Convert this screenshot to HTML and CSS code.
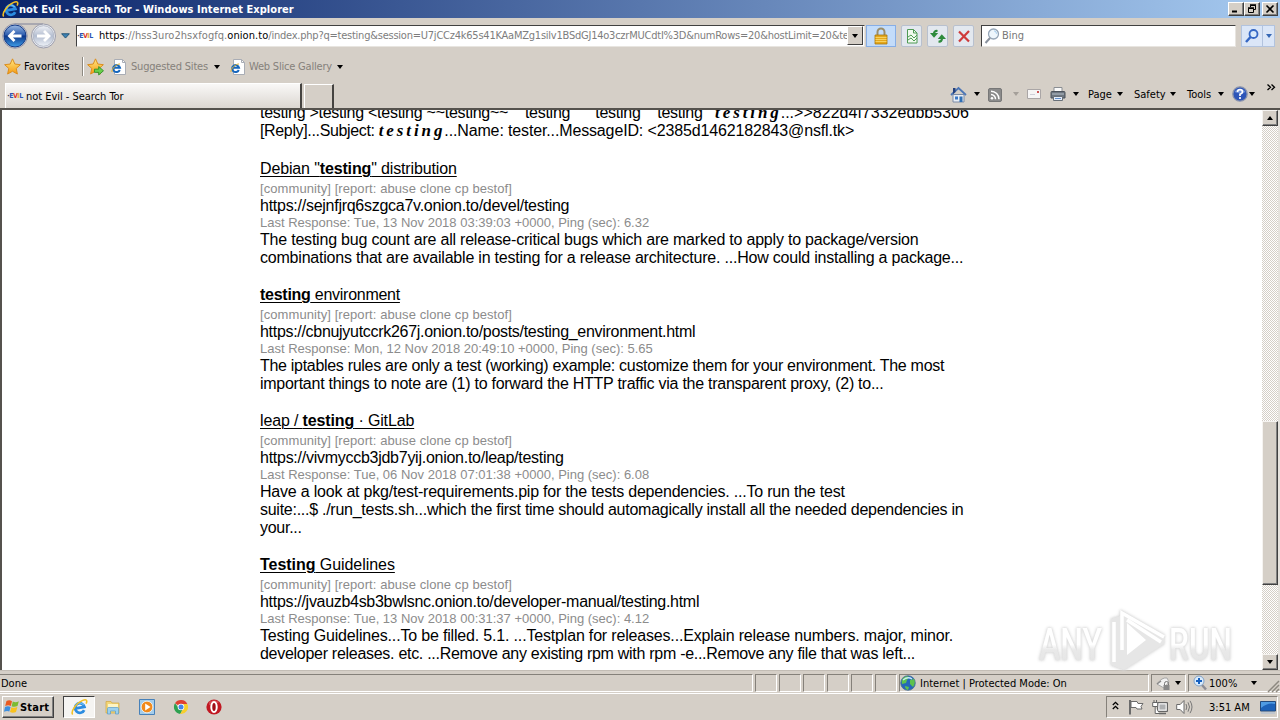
FILE: index.html
```
<!DOCTYPE html>
<html lang="en">
<head>
<meta charset="utf-8">
<title>not Evil - Search Tor</title>
<link rel="stylesheet" href="styles.css">
</head>
<body>
<svg width="0" height="0" class="defs">
  <defs>
    <linearGradient id="blueBall" x1="0" y1="0" x2="0" y2="1"><stop offset="0" stop-color="#9dbbe4"/><stop offset=".45" stop-color="#2c5cae"/><stop offset=".5" stop-color="#0c3588"/><stop offset="1" stop-color="#3fa0ea"/></linearGradient>
    <linearGradient id="greyBall" x1="0" y1="0" x2="0" y2="1"><stop offset="0" stop-color="#f0f2f7"/><stop offset=".5" stop-color="#b3bdd0"/><stop offset="1" stop-color="#eef2f8"/></linearGradient>
    <linearGradient id="gold" x1="0" y1="0" x2="0" y2="1"><stop offset="0" stop-color="#ffe884"/><stop offset="1" stop-color="#f59a10"/></linearGradient>
    <symbol id="ie" viewBox="0 0 16 16">
      <path d="M12.4 10.400A4.500 4.500 0 1 1 12.700 7.500L4.600 8.800" fill="none" stroke="#2c8ce0" stroke-width="2.600"/>
      <path d="M4.500 5.800Q8 1.800 12 5.600" fill="none" stroke="#6cc0f4" stroke-width="1"/>
      <path d="M1.600 14.6C-.6 12 5.2 3.6 11 1.300c3.600-1.400 4.600.2 3.200 3" fill="none" stroke="#f2c024" stroke-width="1.500"/>
    </symbol>
    <symbol id="iepage" viewBox="0 0 16 16">
      <path d="M3.500.500h8l3 3v12h-11z" fill="#fff" stroke="#a9adb5"/>
      <path d="M11.500.500v3h3" fill="none" stroke="#a9adb5"/>
      <path d="M8.800 11A3.500 3.500 0 1 1 9 8.800H2.800" fill="none" stroke="#1767bd" stroke-width="2"/>
      <path d="M1 13C0 10 6 4.600 9 5" fill="none" stroke="#e9b52c" stroke-width="1"/>
    </symbol>
    <symbol id="star" viewBox="0 0 16 16">
      <path d="M8 .8l2.200 4.900 5.200.6-3.900 3.500 1.100 5.300L8 12.500l-4.600 2.600 1.100-5.300L.6 6.300l5.200-.6z" fill="url(#gold)" stroke="#d98a1a" stroke-width=".9"/>
    </symbol>
  </defs>
</svg>

<div class="screen">
  <header class="titlebar">
    <svg class="ic18" viewBox="0 0 16 16"><use href="#ie"/></svg>
    <h1 class="title">not Evil - Search Tor - Windows Internet Explorer</h1>
    <div class="winbtns">
      <span class="winbtn"><svg viewBox="0 0 12 10"><path d="M2 7.500h5" stroke="#000" stroke-width="2"/></svg></span>
      <span class="winbtn"><svg viewBox="0 0 12 10"><path d="M4.500 3V1.500h5v4H8M2.500 4.500h5v4h-5z" fill="none" stroke="#000"/><path d="M4 1h6M2 4h6" stroke="#000" stroke-width="1.500"/></svg></span>
      <span class="winbtn close"><svg viewBox="0 0 12 10"><path d="M2.500 1.500l7 7m0-7l-7 7" stroke="#000" stroke-width="1.600"/></svg></span>
    </div>
  </header>

  <div class="navbar">
    <svg class="navballs" viewBox="0 0 58 30">
      <path d="M15 3h28" stroke="#a9a8b0" stroke-width="2"/>
      <circle cx="15" cy="15" r="12.300" fill="#d9dbe2" stroke="#9897a3"/>
      <circle cx="15" cy="15" r="11" fill="url(#blueBall)" stroke="#143a86"/>
      <path d="M9 15h12.500M14.500 10L9.500 15l5 5" fill="none" stroke="#fff" stroke-width="2.800"/>
      <circle cx="43.500" cy="15" r="12" fill="#e9ebf0" stroke="#9a9cab"/>
      <circle cx="43.500" cy="15" r="10.300" fill="url(#greyBall)" stroke="#b4bac8"/>
      <path d="M37 15h12M44 10l5 5-5 5" fill="none" stroke="#fff" stroke-width="2.800"/>
    </svg>
    <svg class="navdrop" viewBox="0 0 10 6"><path d="M.7.500h8.600L5 5.300z" fill="#3d83b4" stroke="#1b4d72"/></svg>
    <div class="address">
      <span class="fav"><i class="o">·</i><i class="b">E</i><i class="r">V</i><i class="y">I</i><i class="b">L</i></span>
      <span class="url"><span class="host"><b>https</b>://hss3uro2hsxfogfq.<b>onion.to</b></span>/index.php?q=testing&amp;session=U7jCCz4k65s41KAaMZg1silv1BSdGJ14o3czrMUCdtI%3D&amp;numRows=20&amp;hostLimit=20&amp;te</span>
      <span class="combo"><i class="tri"></i></span>
    </div>
    <span class="lock"><svg viewBox="0 0 16 18"><path d="M4.500 9V5a3.500 3.500 0 0 1 7 0v4" fill="none" stroke="#9a8d6a" stroke-width="2"/><path d="M2 8h12v9H2z" fill="#e5a81c" stroke="#a8760c" stroke-width=".8"/><path d="M2.500 10.500h11M2.500 12.500h11M2.500 14.500h11" stroke="#f6d160"/></svg></span>
    <span class="navbtn"><svg viewBox="0 0 16 16"><path d="M3.500 1.500h6l3.500 3.500v10H3.500z" fill="#f0faee" stroke="#4f9a54"/><path d="M9.500 1.500V5H13" fill="none" stroke="#4f9a54"/><path d="M4 9l3-2 3 3 3-3M4 12l3-2 3 3 3-3" fill="none" stroke="#4f9a54"/></svg></span>
    <span class="navbtn"><svg viewBox="0 0 16 16"><path d="M7.500 3Q4 2.500 4 6" fill="none" stroke="#2e8b3c" stroke-width="2.200"/><path d="M0 5h8.200L4 9.800z" fill="#2e8b3c"/><path d="M8.500 13.500Q12 14 12 10" fill="none" stroke="#2e8b3c" stroke-width="2.200"/><path d="M7.800 11H16l-4.200-4.800z" fill="#2e8b3c"/></svg></span>
    <span class="navbtn"><svg viewBox="0 0 16 16"><path d="M3 3.500l10 10M13 3L3 13.500" stroke="#cf3a3a" stroke-width="2.200"/></svg></span>
    <div class="search">
      <svg class="ic16" viewBox="0 0 16 16"><circle cx="9.500" cy="6" r="5" fill="#eef6fc" stroke="#95a5b7" stroke-width="1.300"/><path d="M6 10L1.500 15" stroke="#8a929e" stroke-width="2"/><path d="M10 2.800q2.500.4 2.500 3" stroke="#a5cdee" fill="none"/></svg>
      <span>Bing</span>
    </div>
    <span class="go"><svg class="ic16" viewBox="0 0 16 16"><circle cx="9.500" cy="6" r="4" fill="#d8e9fb" stroke="#3567c4" stroke-width="1.800"/><path d="M6.500 9L2 14" stroke="#3567c4" stroke-width="2.500"/></svg></span>
    <span class="godrop"><i class="tri blue"></i></span>
  </div>

  <div class="favbar">
    <svg class="ic17" viewBox="0 0 16 16"><use href="#star"/></svg>
    <span class="favtext">Favorites</span>
    <i class="sep"></i>
    <svg class="ic17 add" viewBox="0 0 16 16"><use href="#star"/><path d="M7 10.500h4V8l4.500 4-4.500 4v-2.500H7z" fill="#69cf4b" stroke="#2b8b24" stroke-width=".8"/></svg>
    <svg class="ic16 sug" viewBox="0 0 16 16"><use href="#iepage"/></svg>
    <span class="gtext s1">Suggested Sites</span><i class="tri"></i>
    <svg class="ic16 web" viewBox="0 0 16 16"><use href="#iepage"/></svg>
    <span class="gtext s2">Web Slice Gallery</span><i class="tri"></i>
  </div>

  <div class="tabrow">
    <div class="tab"><span class="fav"><i class="o">·</i><i class="b">E</i><i class="r">V</i><i class="y">I</i><i class="b">L</i></span><span class="tabtext">not Evil - Search Tor</span></div>
    <div class="newtab"></div>
    <div class="cmds">
      <svg class="ic17" viewBox="0 0 17 17"><path d="M3 8.500h11V16H3z" fill="#e8eef6" stroke="#7c8ba5"/><path d="M1 9l7.500-7L16 9" fill="none" stroke="#4c76b6" stroke-width="1.800"/><path d="M3 2h2.500v4L3 8z" fill="#24417d"/><path d="M9.500 10.500h3V16h-3z" fill="#2f6fb5"/><path d="M5 10.500h3v3H5z" fill="#3b79c6"/></svg>
      <i class="tri c1"></i>
      <svg class="rss" viewBox="0 0 14 14"><rect x=".5" y=".5" width="13" height="13" rx="1.500" fill="#8b8b8b" stroke="#777"/><circle cx="4" cy="10.300" r="1.300" fill="#fff"/><path d="M3 6.500a4.500 4.500 0 0 1 4.500 4.800M3 3.200a8 8 0 0 1 8 8.100" fill="none" stroke="#fff" stroke-width="1.500"/></svg>
      <i class="tri faint"></i>
      <svg class="mail" viewBox="0 0 14 10"><path d="M.5.500h13v9H.5z" fill="#f6f5f5" stroke="#aaa6a6"/><path d="M10 2h2v2h-2z" fill="#c55" /><path d="M3 5.500h5" stroke="#cfcfd8"/></svg>
      <svg class="ic16 print" viewBox="0 0 16 16"><path d="M4 1.500h8V6H4z" fill="#fafafa" stroke="#8a8e93"/><path d="M1 6.500q0-1 1-1h12q1 0 1 1V12H1z" fill="#6d7680" stroke="#4c535b"/><path d="M2 8h12" stroke="#b9c1c9"/><path d="M3.500 10.500h9v4h-9z" fill="#e6eefa" stroke="#687078"/><path d="M5 12.500h6" stroke="#6590c8"/></svg>
      <i class="tri c2"></i>
      <span class="cmd w1">Page</span><i class="tri"></i>
      <span class="cmd w2">Safety</span><i class="tri"></i>
      <span class="cmd w3">Tools</span><i class="tri"></i>
      <svg class="ic16 help" viewBox="0 0 16 16"><circle cx="8" cy="8" r="7.200" fill="#2d55b8" stroke="#8b94ac" stroke-width="1.300"/><path d="M2.500 6a6 5 0 0 1 11 0q-5 2.500-11 0z" fill="#88a8e5" opacity=".7"/><path d="M5.500 6Q5.600 3.700 8 3.700T10.500 6Q10.500 7.300 8 8.200V10M8 11v2" fill="none" stroke="#fff" stroke-width="1.700"/></svg>
      <i class="tri c3"></i>
      <svg class="chev" viewBox="0 0 8 7"><path d="M.5.500l3 2.800-3 2.800M4.500.500l3 2.800-3 2.800" fill="none" stroke="#000" stroke-width="1.300"/></svg>
    </div>
  </div>

  <div class="viewport">
    <main class="page">
      <div class="prev">
        <p class="k26">testing &gt;testing &lt;testing ~~testing~~&nbsp; &nbsp; testing&nbsp; &nbsp; &nbsp; testing&nbsp; &nbsp; testing&nbsp; &nbsp;<em>testing</em><span class="k0">...&gt;&gt;822d4f7332edbb5306</span></p>
        <p class="k35">[Reply]...Subject: <em>testing</em><span class="k14">...Name: tester...MessageID: &lt;2385d1462182843@nsfl.tk&gt;</span></p>
      </div>
      <article class="hit">
        <h2><a class="k14">Debian "<b>testing</b>" distribution</a></h2>
        <p class="meta tags">[community] [report: abuse clone cp bestof]</p>
        <p class="link k26">https://sejnfjrq6szgca7v.onion.to/devel/testing</p>
        <p class="meta resp">Last Response: Tue, 13 Nov 2018 03:39:03 +0000, Ping (sec): 6.32</p>
        <p class="desc k22">The testing bug count are all release-critical bugs which are marked to apply to package/version<br>combinations that are available in testing for a release architecture. ...How could installing a package...</p>
      </article>
      <article class="hit">
        <h2><a class="k26"><b>testing</b> environment</a></h2>
        <p class="meta tags">[community] [report: abuse clone cp bestof]</p>
        <p class="link k30">https://cbnujyutccrk267j.onion.to/posts/testing_environment.html</p>
        <p class="meta resp">Last Response: Mon, 12 Nov 2018 20:49:10 +0000, Ping (sec): 5.65</p>
        <p class="desc k26"><span class="k30">The iptables rules are only a test (working) example: customize them for your environment. The most</span><br>important things to note are (1) to forward the HTTP traffic via the transparent proxy, (2) to...</p>
      </article>
      <article class="hit">
        <h2><a class="k14">leap / <b>testing</b> · GitLab</a></h2>
        <p class="meta tags">[community] [report: abuse clone cp bestof]</p>
        <p class="link k26">https://vivmyccb3jdb7yij.onion.to/leap/testing</p>
        <p class="meta resp">Last Response: Tue, 06 Nov 2018 07:01:38 +0000, Ping (sec): 6.08</p>
        <p class="desc k26"><span class="k22">Have a look at pkg/test-requirements.pip for the tests dependencies. ...To run the test</span><br>suite:...$ ./run_tests.sh...which the first time should automagically install all the needed dependencies in<br>your...</p>
      </article>
      <article class="hit">
        <h2><a class="k5"><b>Testing</b> Guidelines</a></h2>
        <p class="meta tags">[community] [report: abuse clone cp bestof]</p>
        <p class="link k30">https://jvauzb4sb3bwlsnc.onion.to/developer-manual/testing.html</p>
        <p class="meta resp">Last Response: Tue, 13 Nov 2018 00:31:37 +0000, Ping (sec): 4.12</p>
        <p class="desc k28"><span class="k17">Testing Guidelines...To be filled. 5.1. ...Testplan for releases...Explain release numbers. major, minor.</span><br>developer releases. etc. ...Remove any existing rpm with rpm -e...Remove any file that was left...</p>
      </article>
    </main>
    <div class="scroll">
      <span class="sbtn"><i class="tri up"></i></span>
      <span class="thumb"></span>
      <span class="sbtn"><i class="tri"></i></span>
    </div>
  </div>

  <footer class="status">
    <span class="pane done">Done</span>
    <span class="pane cell"></span><span class="pane cell"></span><span class="pane cell"></span><span class="pane cell"></span><span class="pane cell"></span><span class="pane cell"></span>
    <span class="pane zone"><svg class="ic16" viewBox="0 0 16 16"><circle cx="8" cy="8" r="7.300" fill="#2567b8" stroke="#4b6f92" stroke-width=".8"/><path d="M3 3q4-3 6-1l-2 3-1 3-4 1q-1-3 1-6zM10 5l4-1q2 4-1 8l-3-3zM5 11l4 1-1 3q-3-1-3-4z" fill="#5dc24c"/><path d="M3 5q5-4 9-1" fill="none" stroke="#c5ecf7" stroke-width="1.300"/></svg><span>Internet | Protected Mode: On</span></span>
    <span class="pane prot"><svg class="ic16" viewBox="0 0 16 16"><path d="M1 9q5-7 10-6l2 4-5 6z" fill="#f2f2f2" stroke="#a7a7a7"/><path d="M1 9l4-3" stroke="#888" stroke-width="1.500"/><path d="M8.500 10V8.500a2 2 0 0 1 4 0V10" fill="none" stroke="#777"/><path d="M7.500 10h6v5h-6z" fill="#898989"/></svg><i class="tri"></i></span>
    <span class="pane zoomp"><svg class="ic16" viewBox="0 0 16 16"><path d="M10 10l4 4.500" stroke="#8d8d95" stroke-width="2.500"/><circle cx="7" cy="6" r="5" fill="#d9ebfc" stroke="#83a2c6"/><path d="M7 3v6M4 6h6" stroke="#1660c0" stroke-width="2"/></svg><span class="pct">100%</span><i class="tri"></i>
      <svg class="grip" viewBox="0 0 12 12"><path d="M1 12L12 1M5 12l7-7M9 12l3-3" stroke="#8d8980" stroke-width="1.500"/></svg></span>
  </footer>

  <div class="taskbar">
    <span class="start"><svg class="ic16" viewBox="0 0 16 16"><path d="M2.500 2q3-1.500 5.500.2L6.800 7Q4.500 5.500 1.200 7z" fill="#ea5a20"/><path d="M8.800 2.500q2.700 1.500 6-.2L13.500 7Q10.500 8.500 7.600 7.200z" fill="#7cbb32"/><path d="M1 8q3-1.500 5.600 0L5.300 12.500Q3 11.500 0 12.800z" fill="#3e8fdf"/><path d="M7.400 8.300q3 1.200 6-.2L12 12.900Q9 14.500 6 13z" fill="#f9c21e"/></svg><b>Start</b></span>
    <span class="task"><svg class="ic18" viewBox="0 0 16 16"><use href="#ie"/></svg></span>
    <svg class="ic16 q1" viewBox="0 0 16 16"><path d="M1 2.500h5l1 1.500h7v10H1z" fill="#f2d678" stroke="#d2a63f" stroke-width=".7"/><path d="M3 5h10v5H3z" fill="#fdf4c4"/><path d="M2.500 15V9.500q0-1 1-1h9q1 0 1 1V15h-3v-3h-5v3z" fill="#9bd0ee" stroke="#5a9cc8" stroke-width=".7"/></svg>
    <svg class="ic16 q2" viewBox="0 0 16 16"><path d="M.5.500h15v15H.5z" fill="#a4cdeb" stroke="#4781b9"/><circle cx="8" cy="8" r="5.800" fill="#f18a1c" stroke="#fff" stroke-width=".7"/><path d="M6.200 4.500L11.500 8l-5.300 3.500z" fill="#fff"/></svg>
    <svg class="ic14 q3" viewBox="0 0 14 14"><path d="M7 7L1 3.300A7 7 0 0 1 13.300 4H7z" fill="#df4031"/><path d="M1 3.300A7 7 0 0 0 6.200 14L9.200 8.500 5 8.500z" fill="#2da150"/><path d="M13.300 4A7 7 0 0 1 6.200 14L9.800 8 9 4z" fill="#f7cf2b"/><circle cx="7" cy="7" r="3.300" fill="#fff"/><circle cx="7" cy="7" r="2.500" fill="#4484e8"/></svg>
    <svg class="ic16 q4" viewBox="0 0 16 16"><circle cx="8" cy="8" r="7.600" fill="#c11822"/><path d="M3 3Q8-.5 13 3q-2 3-10 3z" fill="#e7707a" opacity=".5"/><ellipse cx="8" cy="8" rx="2.700" ry="5" fill="#a00c16" stroke="#fff" stroke-width="2"/></svg>
    <div class="tray">
      <svg class="up2" viewBox="0 0 7 9"><path d="M.8 4l2.700-2.700L6.200 4M.8 8l2.700-2.700L6.200 8" fill="none" stroke="#000" stroke-width="1.300"/></svg>
      <svg class="ic16 t1" viewBox="0 0 16 16"><path d="M2 1v14.500" stroke="#6b6b6b" stroke-width="2"/><path d="M3 2.500h6l1 2h5l-2 3 1 2.500H9L8 8.500H3z" fill="#fff" stroke="#6b6b6b"/></svg>
      <svg class="ic16 t2" viewBox="0 0 16 16"><path d="M5.500 3.500h10v9h-10z" fill="#c8c8c8" stroke="#666"/><path d="M7 5h7v6H7z" fill="#aeb0b2" stroke="#fff" stroke-width=".8"/><path d="M7 14.500h7" stroke="#666" stroke-width="1.500"/><path d="M.7 3.500h5v4h-5zM2 1v2M4.500 1v2M3.200 8v6.500H7" fill="#fff" stroke="#666"/></svg>
      <svg class="ic16 t3" viewBox="0 0 16 16"><path d="M.7 5.500h3.500L8 1.500v13l-3.800-4H.7z" fill="#fff" stroke="#6b6b6b"/><path d="M10 5q1.600 3 0 6M12 3.300q3 4.700 0 9.400M14 1.800q4 6.200 0 12.400" fill="none" stroke="#777"/></svg>
      <span class="clock">3:51 AM</span>
      <svg class="desk" viewBox="0 0 16 13"><path d="M.5.500h15v9.500H.5z" fill="#1d62b9" stroke="#234a7d"/><path d="M1 7Q8 1 15 3V1H1z" fill="#4f9be3"/><path d="M1 12h14" stroke="#b7c3d0" stroke-width="1.500"/></svg>
    </div>
  </div>

  <svg class="watermark" viewBox="0 0 200 66">
    <defs><linearGradient id="wm" x1="0" y1="0" x2="0" y2="1"><stop offset="0" stop-color="#fff"/><stop offset=".5" stop-color="#fff"/><stop offset=".6" stop-color="#e9e9e9"/><stop offset="1" stop-color="#e2e2e2"/></linearGradient></defs>
    <g class="wmtext" fill="url(#wm)">
      <text x="4" y="52" textLength="63" lengthAdjust="spacingAndGlyphs">ANY</text>
      <text x="134" y="52" textLength="63" lengthAdjust="spacingAndGlyphs">RUN</text>
    </g>
    <path class="wmback" d="M86 3L129 27v9L89 62l-13-5V11l9-3z"/>
    <path class="wmline" d="M79 54V14M87 42V5l42 24M92 12l34 22"/>
    <path class="wmhole" d="M92 15l19 17-19 15z"/>
  </svg>
</div>
</body>
</html>
```
FILE: styles.css
```
* { box-sizing: border-box; }
body { margin: 0; font: 11px "DejaVu Sans Condensed", "DejaVu Sans", sans-serif; color: #000; }
h1, h2, p { margin: 0; font-weight: normal; }
i { font-style: normal; }
svg { display: block; flex: none; overflow: visible; }
.defs { position: absolute; }
.screen { position: relative; width: 1280px; height: 720px; overflow: hidden; display: flex; flex-direction: column; background: #d5cfc7; }
.ic14 { width: 14px; height: 14px; }
.ic16 { width: 16px; height: 16px; }
.ic17 { width: 17px; height: 17px; }
.ic18 { width: 17px; height: 17px; }
.tri { flex: none; width: 0; height: 0; border: 3.5px solid transparent; border-top: 4px solid #000; border-bottom: 0; }
.tri.up { border-top: 0; border-bottom: 4px solid #000; }
.tri.blue { border-top-color: #3567b4; }
.tri.faint { border-top-color: #a5a09a; }

.titlebar { flex: none; height: 18px; display: flex; align-items: center; padding-left: 2px; background: linear-gradient(90deg, #0a246a, #a6caf0); }
.title { font-weight: bold; font-size: 11px; color: #fff; letter-spacing: .05px; flex: 1; white-space: nowrap; }
.winbtns { display: flex; padding-right: 2px; }
.winbtn { width: 16px; height: 14px; background: #d5cfc7; border: 1px solid; border-color: #fff #404040 #404040 #fff; box-shadow: inset -1px -1px #808080; padding: 1px 1px; }
.winbtn svg { width: 12px; height: 10px; }
.close { margin-left: 2px; }

.navbar { flex: none; height: 35px; display: flex; align-items: center; }
.navballs { width: 58px; height: 30px; margin-left: 0; }
.navdrop { width: 9px; height: 6px; margin-left: 3px; }
.address { width: 789px; height: 22px; margin-left: 6px; background: #fff; border: 1px solid; border-color: #404040 #e8e5e0 #e8e5e0 #404040; display: flex; align-items: center; }
.fav { font: bold 7px "DejaVu Sans Condensed", sans-serif; letter-spacing: -.5px; width: 16px; flex: none; display: inline-flex; justify-content: center; }
.fav .b { color: #2a56b5; } .fav .r { color: #d33; } .fav .y { color: #e6b01c; } .fav .o { color: #333; }
.url { margin-left: 6px; width: 748px; white-space: nowrap; color: #7d7d7d; letter-spacing: -.23px; }
.host { letter-spacing: .06px; }
.url b { font-weight: normal; color: #000; }
.combo { width: 16px; height: 19px; background: #d5cfc7; border: 1px solid; border-color: #fff #404040 #404040 #fff; display: flex; align-items: center; justify-content: center; }
.lock { width: 30px; height: 22px; margin-left: 1px; background: #c3dcfa; border: 1px solid #87aee6; display: flex; align-items: center; justify-content: center; }
.lock svg { width: 16px; height: 18px; }
.navbtn { width: 21px; height: 22px; margin-left: 5px; background: #e3e8ef; border: 1px solid #b8c0ce; border-radius: 2px; display: flex; align-items: center; justify-content: center; }
.navbtn svg { width: 16px; height: 16px; }
.search { width: 255px; height: 22px; margin-left: 7px; background: #fff; border: 1px solid; border-color: #404040 #e8e5e0 #e8e5e0 #404040; display: flex; align-items: center; gap: 2px; padding-left: 2px; color: #777; }
.go { width: 22px; height: 22px; margin-left: 5px; background: #dbe6f7; border: 1px solid #b2c3de; display: flex; align-items: center; justify-content: center; }
.godrop { width: 13px; height: 22px; margin-left: -1px; background: #dbe6f7; border: 1px solid #b2c3de; display: flex; align-items: center; justify-content: center; }

.favbar { flex: none; height: 27px; display: flex; align-items: center; padding-left: 4px; white-space: nowrap; }
.favtext { margin-left: 3px; width: 46px; font-size: 11px; letter-spacing: .1px; }
.sep { width: 2px; height: 19px; margin: 0 4px 0 12px; background: #8d8981; border-right: 1px solid #fff; }
.add { margin-left: -1px; }
.sug { margin-left: 7px; }
.gtext { color: #85817b; letter-spacing: -.2px; }
.s1 { width: 78px; margin: 0 5px 0 4px; }
.s2 { width: 84px; margin: 0 4px 0 3px; }
.web { margin-left: 10px; }

.tabrow { flex: none; height: 30px; display: flex; align-items: flex-end; padding-left: 5px; border-bottom: 2px solid #55524d; }
.tab { width: 297px; height: 25px; background: linear-gradient(#f9f8f7, #dcd7d1); border-left: 1px solid #fff; border-top: 1px solid #fff; border-right: 2px solid #454340; display: flex; align-items: center; padding-left: 1px; }
.tabtext { margin-left: 3px; white-space: nowrap; letter-spacing: -.03px; }
.newtab { width: 30px; height: 24px; margin-left: 2px; border: 1px solid #fff; border-bottom: 0; border-right: 2px solid #454340; }
.cmds { display: flex; align-items: center; margin-left: 616px; height: 28px; white-space: nowrap; }
.c1 { margin-left: 7px; }
.rss { width: 14px; height: 14px; margin: 2px 11px 0 8px; }
.mail { width: 14px; height: 10px; margin-left: 8px; }
.print { margin-left: 9px; }
.c2 { margin-left: 7px; }
.cmd { margin-right: 4px; }
.w1 { width: 25px; margin-left: 9px; } .w2 { width: 32px; margin-left: 11px; } .w3 { width: 27px; margin-left: 11px; }
.help { margin-left: 8px; } .c3 { margin-left: 1px; }
.chev { width: 8px; height: 7px; margin: -14px 0 0 12px; }

.viewport { flex: none; height: 560px; display: flex; background: #fff; border-left: 2px solid #55524d; border-right: 2px solid #e5e2dd; overflow: hidden; }
.page { flex: 1; padding-left: 258px; font: 16px/18px "Liberation Sans", Arial, sans-serif; white-space: nowrap; overflow: hidden; }
.prev { margin-top: -6px; margin-bottom: 18px; }
.prev em { font: italic bold 17px/10px "Liberation Serif", serif; letter-spacing: 2.9px; margin-right: -1px; }
.hit { margin-bottom: 17px; }
.hit h2 { font-size: 16px; line-height: 22px; }
.hit a { text-decoration: underline; text-decoration-thickness: 1px; text-underline-offset: 2px; }
.meta { font-size: 13px; line-height: 17px; color: #8c8c8c; }
.tags { letter-spacing: .08px; }
.resp { letter-spacing: 0; }
.link { line-height: 17px; }
.k0 { letter-spacing: .02px; }
.k5 { letter-spacing: -.05px; }
.k14 { letter-spacing: -.14px; }
.k17 { letter-spacing: -.175px; }
.k22 { letter-spacing: -.21px; }
.k26 { letter-spacing: -.265px; }
.k28 { letter-spacing: -.285px; }
.k30 { letter-spacing: -.3px; }
.k35 { letter-spacing: -.35px; }
.scroll { width: 16px; display: flex; flex-direction: column; background: repeating-conic-gradient(#fff 0 25%, #d5cfc7 0 50%) 0 0 / 2px 2px; }
.sbtn, .thumb { flex: none; background: #d5cfc7; border: 1px solid; border-color: #f5f3f0 #404040 #404040 #f5f3f0; box-shadow: inset -1px -1px #808080; }
.sbtn { height: 16px; display: flex; align-items: center; justify-content: center; }
.thumb { height: 164px; margin: 295px 0 69px; }

.status { flex: none; height: 24px; display: flex; align-items: center; border-top: 1px solid #c3bdb5; border-bottom: 1px solid #fff; padding-top: 2px; white-space: nowrap; }
.pane { flex: none; height: 18px; margin-right: 2px; border: 1px solid; border-color: #85817a #fff #fff #85817a; display: flex; align-items: center; }
.done { width: 753px; border-left: 0; padding-left: 1px; }
.cell { width: 22px; }
.zone { width: 250px; }
.zone span { margin-left: 4px; }
.prot { width: 35px; padding-left: 4px; }
.prot .tri { margin-left: 3px; }
.zoomp { width: 92px; border-right: 0; padding-left: 3px; }
.pct { width: 30px; margin: 0 12px 0 1px; }
.grip { width: 12px; height: 12px; margin: 5px 0 0 10px; }

.taskbar { flex: none; height: 26px; display: flex; align-items: center; padding: 0 2px; }
.start { width: 52px; height: 22px; border: 1px solid; border-color: #fff #404040 #404040 #fff; box-shadow: inset -1px -1px #808080; display: flex; align-items: center; padding-left: 1px; font-size: 11px; }
.start b { margin-left: 0; letter-spacing: .2px; }
.task { width: 32px; height: 22px; margin-left: 9px; background: #f5f4f2; border: 1px solid; border-color: #404040 #fff #fff #404040; display: flex; align-items: center; justify-content: center; }
.q1 { margin-left: 10px; } .q2 { margin-left: 18px; } .q3 { margin-left: 19px; } .q4 { margin-left: 18px; }
.tray { margin-left: auto; width: 172px; height: 22px; border: 1px solid; border-color: #85817a #fff #fff #85817a; display: flex; align-items: center; padding-left: 6px; white-space: nowrap; }
.up2 { width: 7px; height: 9px; margin-top: -3px; margin-left: -1px; }
.t1 { margin-left: 9px; } .t2 { margin-left: 8px; } .t3 { margin-left: 8px; }
.clock { width: 41px; margin-left: 17px; }
.desk { width: 16px; height: 13px; margin-left: 10px; }

.watermark { position: absolute; left: 1035px; top: 608px; width: 200px; height: 66px; filter: drop-shadow(0 0 1px #ddd) drop-shadow(0 0 1.5px #d8d8d8); }
.wmtext { font: 500 45px Roboto, sans-serif; }
.wmback { fill: #e6e6e6; }
.wmhole { fill: #fff; }
.wmline { fill: none; stroke: #fff; stroke-width: 3.5; }
```
